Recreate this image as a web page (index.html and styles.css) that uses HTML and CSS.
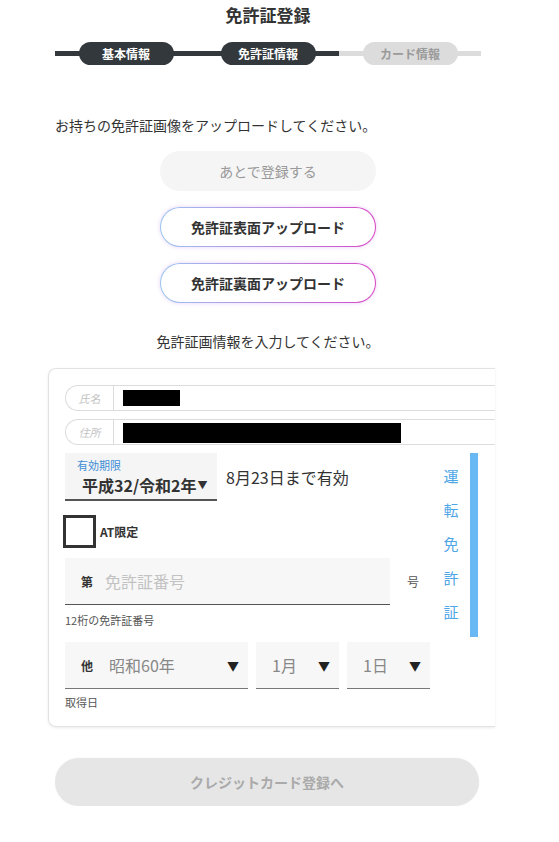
FILE: index.html
```html
<!DOCTYPE html>
<html lang="ja">
<head>
  <meta charset="UTF-8">
  <meta name="viewport" content="width=device-width, initial-scale=1.0">
  <title>免許証登録</title>
  <link rel="stylesheet" href="styles.css">
</head>
<body>
  <div class="page">
    <h1 class="title">免許証登録</h1>

    <!-- Steps -->
    <div class="steps">
      <div class="step done"><span class="pill">基本情報</span></div>
      <div class="step done"><span class="pill">免許証情報</span></div>
      <div class="step todo"><span class="pill">カード情報</span></div>
    </div>

    <p class="lead">お持ちの免許証画像をアップロードしてください。</p>

    <div class="actions">
      <button class="btn-later">あとで登録する</button>
      <button class="btn-upload">免許証表面アップロード</button>
      <button class="btn-upload">免許証裏面アップロード</button>
    </div>

    <p class="lead center">免許証画情報を入力してください。</p>

    <div class="card">
      <div class="id-row">
        <span class="id-label">氏名</span>
        <span class="id-value"><span class="mask mask-name"></span></span>
      </div>
      <div class="id-row">
        <span class="id-label">住所</span>
        <span class="id-value"><span class="mask mask-address"></span></span>
      </div>

      <div class="details">
        <div class="details-main">
          <div class="expiry-row">
            <div class="expiry-select">
              <span class="expiry-label">有効期限</span>
              <span class="expiry-value">平成32/令和2年<span class="caret-sm">▼</span></span>
            </div>
            <span class="expiry-text">8月23日まで有効</span>
          </div>

          <label class="check-row">
            <span class="checkbox"></span>
            <span class="check-text">AT限定</span>
          </label>

          <div class="number-row">
            <div class="number-field">
              <span class="prefix">第</span>
              <span class="placeholder">免許証番号</span>
            </div>
            <span class="suffix">号</span>
          </div>
          <div class="hint">12桁の免許証番号</div>
        </div>

        <div class="side">
          <div class="side-label">
            <span>運</span><span>転</span><span>免</span><span>許</span><span>証</span>
          </div>
          <div class="side-bar"></div>
        </div>
      </div>

      <div class="date-row">
        <div class="date-select date-year">
          <span class="prefix">他</span>
          <span class="date-value">昭和60年</span>
          <span class="caret">▼</span>
        </div>
        <div class="date-select date-small">
          <span class="date-value">1月</span>
          <span class="caret">▼</span>
        </div>
        <div class="date-select date-small">
          <span class="date-value">1日</span>
          <span class="caret">▼</span>
        </div>
      </div>
      <div class="hint">取得日</div>
    </div>

    <button class="btn-next">クレジットカード登録へ</button>
  </div>
</body>
</html>
```

FILE: styles.css
```css
body {
  margin: 0;
  font-family: "Noto Sans CJK JP", "Noto Sans", sans-serif;
  color: #333;
  background-color: #fff;
}
.page {
  width: 426px;
  margin-left: 55px;
}
.title {
  margin: 0;
  padding-top: 3px;
  font-size: 17px;
  line-height: 24px;
  font-weight: bold;
  text-align: center;
  color: #333;
}

/* steps */
.steps {
  display: grid;
  grid-template-columns: repeat(3, 1fr);
  margin-top: 15px;
}
.step {
  display: flex;
  justify-content: center;
  background: linear-gradient(#33383d, #33383d) center / 100% 5px no-repeat;
}
.step.todo {
  background: linear-gradient(#dcdcdc, #dcdcdc) center / 100% 5px no-repeat;
}
.pill {
  width: 95px;
  height: 23px;
  line-height: 23px;
  border-radius: 12px;
  background-color: #33383d;
  color: #fff;
  font-size: 12px;
  font-weight: bold;
  text-align: center;
}
.todo .pill {
  background-color: #dcdcdc;
  color: #9a9a9a;
}

.lead {
  margin: 50px 0 0;
  font-size: 14px;
  line-height: 20px;
}
.lead.center {
  margin-top: 28px;
  text-align: center;
}

/* buttons */
.actions {
  display: flex;
  flex-direction: column;
  align-items: center;
  gap: 16px;
  margin-top: 16px;
}
button {
  font-family: inherit;
  cursor: pointer;
}
.btn-later {
  width: 216px;
  height: 40px;
  border: none;
  border-radius: 20px;
  background-color: #f5f5f5;
  color: #999;
  font-size: 14px;
}
.btn-upload {
  width: 216px;
  height: 40px;
  border: 1.5px solid transparent;
  border-radius: 20px;
  background: linear-gradient(#fff, #fff) padding-box,
    linear-gradient(90deg, #9cc4f0, #b48ee0 50%, #d844c4) border-box;
  box-shadow: 0 0 4px rgba(190, 130, 230, 0.35);
  color: #333;
  font-size: 14px;
  font-weight: bold;
}

/* card */
.card {
  box-sizing: border-box;
  width: 447px;
  margin: 17px 0 0 -7px;
  padding: 16px 0 16px 16px;
  border: 1px solid #e2e2e2;
  border-right: none;
  border-radius: 8px 0 0 8px;
  box-shadow: 0 1px 3px rgba(0, 0, 0, 0.08);
}
.id-row {
  box-sizing: border-box;
  display: flex;
  height: 26px;
  border: 1px solid #dcdcdc;
  border-right: none;
  border-radius: 13px 0 0 13px;
}
.id-row + .id-row {
  margin-top: 8px;
}
.id-label {
  width: 47px;
  border-right: 1px solid #dcdcdc;
  font-size: 11px;
  font-style: italic;
  line-height: 24px;
  text-align: center;
  color: #c4c4c4;
}
.id-value {
  flex: 1;
  display: flex;
  align-items: center;
  padding-left: 9px;
}
.mask {
  display: block;
  background-color: #000;
}
.mask-name {
  width: 57px;
  height: 16px;
}
.mask-address {
  width: 278px;
  height: 20px;
  margin-top: 2px;
}

/* details */
.details {
  display: flex;
  margin-top: 8px;
  padding-right: 17px;
}
.details-main {
  flex: 1;
}
.expiry-row {
  display: flex;
  align-items: center;
}
.expiry-select {
  box-sizing: border-box;
  width: 152px;
  height: 48px;
  padding: 4px 0 0 12px;
  background-color: #f5f5f5;
  border-bottom: 2px solid #555;
}
.expiry-label {
  display: block;
  font-size: 11px;
  line-height: 16px;
  color: #3d8fd6;
}
.expiry-value {
  display: block;
  margin-left: 5px;
  font-size: 16px;
  line-height: 24px;
  font-weight: bold;
  color: #333;
}
.caret-sm {
  font-size: 10px;
  vertical-align: 3px;
  margin-left: 1px;
}
.expiry-text {
  margin-left: 9px;
  font-size: 16px;
  color: #333;
}
.check-row {
  display: flex;
  align-items: center;
  margin: 14px 0 0 -2px;
}
.checkbox {
  box-sizing: border-box;
  width: 33px;
  height: 33px;
  border: 3px solid #333;
}
.check-text {
  margin-left: 4px;
  font-size: 12px;
  font-weight: bold;
}
.number-row {
  display: flex;
  align-items: center;
  margin-top: 10px;
}
.number-field {
  box-sizing: border-box;
  display: flex;
  align-items: center;
  width: 325px;
  height: 47px;
  padding-left: 16px;
  background-color: #f7f7f7;
  border-bottom: 1px solid #555;
}
.prefix {
  font-size: 12px;
  font-weight: bold;
  color: #333;
}
.placeholder {
  margin-left: 12px;
  font-size: 16px;
  color: #c2c2c2;
}
.suffix {
  margin-left: 17px;
  font-size: 12px;
  color: #555;
}
.hint {
  margin-top: 7px;
  font-size: 11px;
  line-height: 16px;
  color: #555;
}
.side {
  display: flex;
  gap: 8px;
}
.side-label {
  display: flex;
  flex-direction: column;
  width: 22px;
  padding-top: 6px;
  font-size: 15px;
  line-height: 34px;
  text-align: center;
  color: #4fa6e6;
}
.side-bar {
  width: 8px;
  height: 184px;
  background-color: #68b8f4;
}

/* acquisition date */
.date-row {
  display: flex;
  gap: 8px;
  margin-top: 5px;
}
.date-select {
  box-sizing: border-box;
  display: flex;
  align-items: center;
  height: 47px;
  padding: 0 9px 0 16px;
  background-color: #f7f7f7;
  border-bottom: 1px solid #777;
}
.date-year {
  width: 183px;
}
.date-small {
  width: 83px;
}
.date-value {
  flex: 1;
  font-size: 16px;
  color: #888;
}
.date-year .date-value {
  margin-left: 16px;
}
.caret {
  font-size: 12px;
  color: #222;
}
.date-row + .hint {
  margin-top: 5px;
}

.btn-next {
  display: block;
  width: 424px;
  height: 48px;
  margin-top: 31px;
  border: none;
  border-radius: 24px;
  background-color: #e6e6e6;
  box-shadow: 0 0 2px rgba(0, 0, 0, 0.06);
  color: #aaa;
  font-size: 14px;
  font-weight: bold;
}
```
